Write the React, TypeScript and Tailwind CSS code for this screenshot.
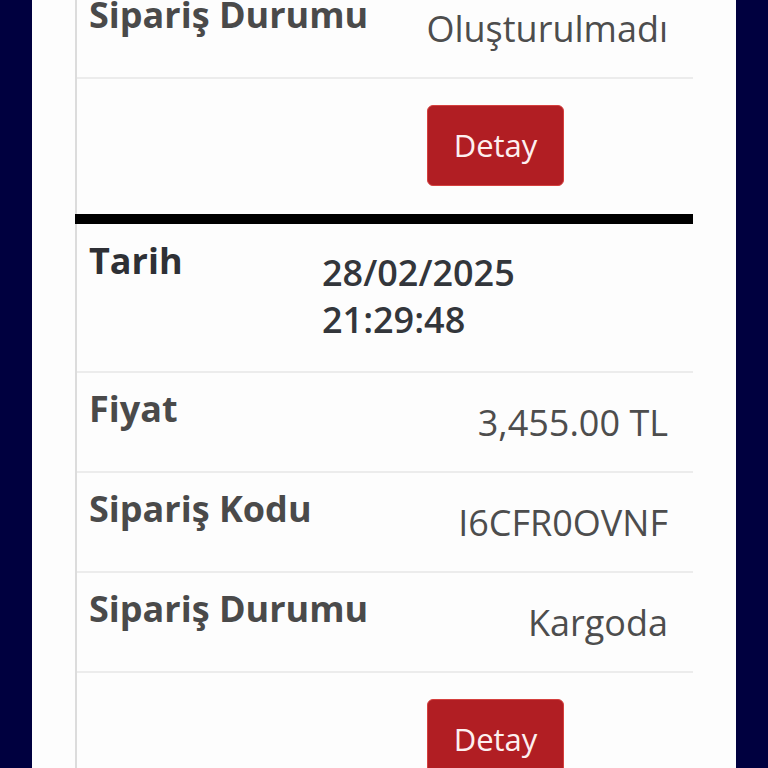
const font = { fontFamily: '"Open Sans", "Noto Sans", sans-serif' };

type Row = { label: string; value: string };

function InfoRow({ label, value }: Row) {
  return (
    <div className="flex items-start border-b-2 border-[#ececec]">
      <div className="w-[245px] shrink-0 whitespace-nowrap pl-[12px] pt-[12px] text-[36px] font-bold leading-[48px] text-[#4a4a4a]">
        {label}
      </div>
      <div className="flex-1 whitespace-nowrap pr-[25px] pt-[26px] pb-[24px] text-right text-[36px] leading-[48px] text-[#4d4d4d]">
        {value}
      </div>
    </div>
  );
}

function DateRow({ date, time }: { date: string; time: string }) {
  return (
    <div className="flex items-start border-b-2 border-[#ececec]">
      <div className="w-[245px] shrink-0 pl-[12px] pt-[13px] text-[36px] font-bold leading-[48px] text-[#2e3035]">
        Tarih
      </div>
      <div className="flex-1 pt-[25px] pb-[28px] text-[36px] font-semibold leading-[47px] text-[#33363b]">
        <div>{date}</div>
        <div>{time}</div>
      </div>
    </div>
  );
}

function DetailButton() {
  return (
    <div className="pl-[350px] pt-[26px] pb-[28px]">
      <button className="h-[81px] w-[137px] rounded-[6px] border border-[#d5403e] bg-[#b11e23] text-[31px] text-[#fdf0f0]">
        Detay
      </button>
    </div>
  );
}

export default function App() {
  return (
    <div style={font} className="h-[768px] overflow-hidden bg-[#00003f] px-8">
      <div className="flex h-full flex-col bg-[#fdfdfd] px-[43px]">
        <div className="-mt-[21px]">
          <div className="border-l-2 border-[#dcdcdc]">
            <InfoRow label="Sipariş Durumu" value="Oluşturulmadı" />
            <DetailButton />
          </div>
          <div className="h-[10px] bg-black" />
          <div className="border-l-2 border-[#dcdcdc]">
            <DateRow date="28/02/2025" time="21:29:48" />
            <InfoRow label="Fiyat" value="3,455.00 TL" />
            <InfoRow label="Sipariş Kodu" value="I6CFR0OVNF" />
            <InfoRow label="Sipariş Durumu" value="Kargoda" />
            <DetailButton />
          </div>
        </div>
      </div>
    </div>
  );
}
